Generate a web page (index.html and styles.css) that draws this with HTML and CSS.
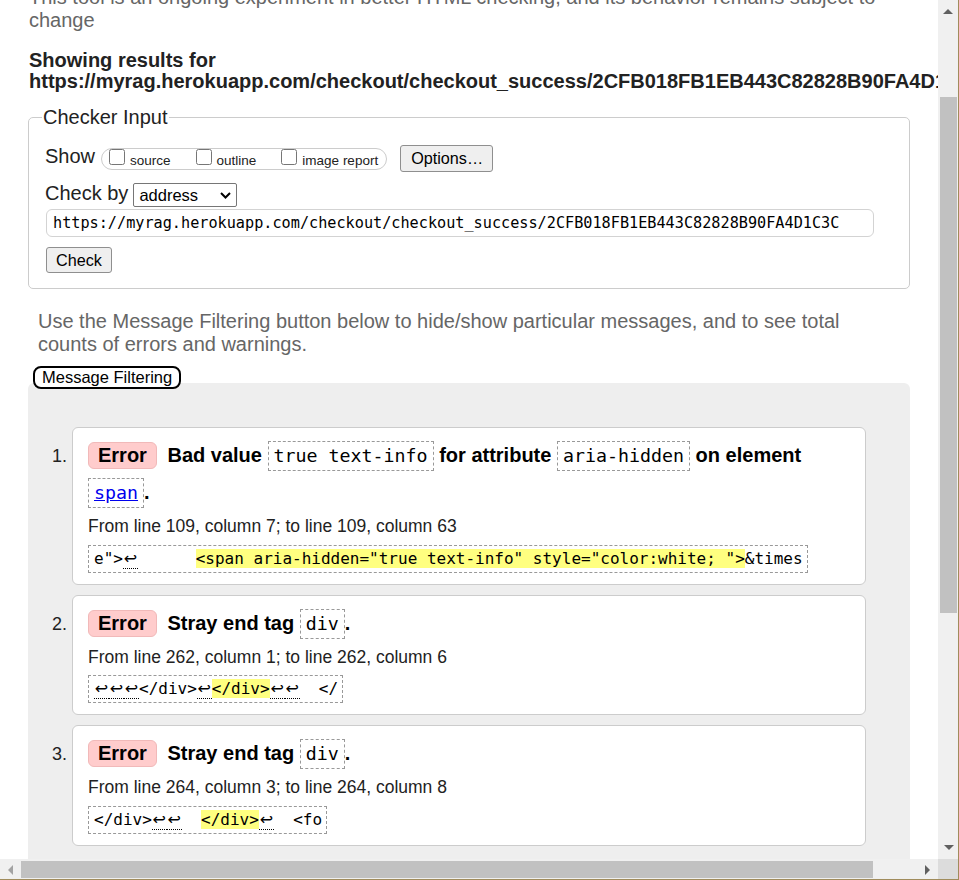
FILE: index.html
```html
<!DOCTYPE html>
<html lang="en">
<head>
<meta charset="utf-8">
<title>Nu Html Checker</title>
<link rel="stylesheet" href="styles.css">
</head>
<body>
<div class="page">
  <p class="intro">This tool is an ongoing experiment in better HTML checking, and its behavior remains subject to change</p>
  <h2 class="results-for">Showing results for <span class="results-url">https://myrag.herokuapp.com/checkout/checkout_success/2CFB018FB1EB443C82828B90FA4D1C3C</span></h2>

  <fieldset class="checker">
    <legend>Checker Input</legend>
    <div class="row show-row">
      <span class="row-label">Show</span>
      <span class="checkboxes">
        <label class="cb"><input type="checkbox"><span>source</span></label>
        <label class="cb"><input type="checkbox"><span>outline</span></label>
        <label class="cb"><input type="checkbox"><span>image report</span></label>
      </span>
      <button class="btn btn-options" type="button">Options…</button>
    </div>
    <div class="row checkby-row">
      <span class="row-label">Check by</span>
      <span class="select" role="combobox" aria-label="Check by">
        <span>address</span>
        <svg class="chev" width="11" height="7" viewBox="0 0 11 7"><path d="M1 1 L5.5 5.5 L10 1" fill="none" stroke="#000" stroke-width="2"/></svg>
      </span>
    </div>
    <input class="url-input" type="text" value="https://myrag.herokuapp.com/checkout/checkout_success/2CFB018FB1EB443C82828B90FA4D1C3C">
    <button class="btn btn-check" type="button">Check</button>
  </fieldset>

  <p class="filter-note">Use the Message Filtering button below to hide/show particular messages, and to see total counts of errors and warnings.</p>
  <button class="filter-btn" type="button">Message Filtering</button>

  <div class="results">
    <ol class="messages">
      <li class="message">
        <p class="msg"><span class="badge">Error</span> Bad value <code class="c">true text-info</code> for attribute <code class="c">aria-hidden</code> on element <code class="c"><a href="#">span</a></code>.</p>
        <p class="loc">From line 109, column 7; to line 109, column 63</p>
        <code class="extract">e"&gt;<span class="lf">↩</span>      <span class="hl">&lt;span aria-hidden="true text-info" style="color:white; "&gt;</span>&amp;times</code>
      </li>
      <li class="message">
        <p class="msg"><span class="badge">Error</span> Stray end tag <code class="c">div</code>.</p>
        <p class="loc">From line 262, column 1; to line 262, column 6</p>
        <code class="extract"><span class="lf">↩</span><span class="lf">↩</span><span class="lf">↩</span>&lt;/div&gt;<span class="lf">↩</span><span class="hl">&lt;/div&gt;</span><span class="lf">↩</span><span class="lf">↩</span>  &lt;/</code>
      </li>
      <li class="message">
        <p class="msg"><span class="badge">Error</span> Stray end tag <code class="c">div</code>.</p>
        <p class="loc">From line 264, column 3; to line 264, column 8</p>
        <code class="extract">&lt;/div&gt;<span class="lf">↩</span><span class="lf">↩</span>  <span class="hl">&lt;/div&gt;</span><span class="lf">↩</span>  &lt;fo</code>
      </li>
    </ol>
  </div>
</div>

<div class="vscroll">
  <svg class="arr arr-up" width="10" height="5" viewBox="0 0 10 5"><polygon points="0,5 5,0 10,5" fill="#606060"/></svg>
  <div class="vthumb"></div>
  <svg class="arr arr-down" width="10" height="5" viewBox="0 0 10 5"><polygon points="0,0 10,0 5,5" fill="#606060"/></svg>
</div>
<div class="hscroll">
  <svg class="arr arr-left" width="5" height="10" viewBox="0 0 5 10"><polygon points="5,0 5,10 0,5" fill="#a3a3a3"/></svg>
  <div class="hthumb"></div>
  <svg class="arr arr-right" width="5" height="10" viewBox="0 0 5 10"><polygon points="0,0 5,5 0,10" fill="#606060"/></svg>
</div>
<div class="corner"></div>
<div class="frame-r"></div>
<div class="frame-b"></div>
</body>
</html>
```
FILE: styles.css
```css
html, body {
  margin: 0;
  padding: 0;
  overflow: hidden;
  background: #fff;
}
body {
  font-family: "Liberation Sans", Arial, sans-serif;
  font-size: 20px;
  color: #222;
}
.page {
  width: 882px;
  margin: -14px 0 0 28px;
}
.intro {
  margin: 0;
  padding-left: 1px;
  color: #666;
  line-height: 23px;
}
.results-for {
  margin: 18px 0 0;
  padding-left: 1px;
  font-size: 20px;
  line-height: 20.5px;
  font-weight: bold;
  color: #222;
}
.results-url {
  white-space: nowrap;
}

/* Checker input */
.checker {
  margin: 15px 0 0;
  padding: 16px 15px 15px 16px;
  border: 1px solid #ccc;
  border-radius: 5px;
  min-width: 0;
}
.checker legend {
  padding: 0 1px;
  margin-left: -3px;
  font-size: 20px;
  line-height: 23px;
  color: #222;
}
.row {
  display: flex;
  align-items: center;
}
.show-row {
  height: 27px;
}
.row-label {
  line-height: 23px;
  margin-bottom: 4px;
}
.show-row .row-label {
  margin-right: 6px;
}
.checkby-row .row-label {
  margin-right: 5px;
}
.checkboxes {
  display: flex;
  align-items: flex-start;
  box-sizing: border-box;
  height: 22px;
  border: 1px solid #ccc;
  border-radius: 11px;
  padding: 0 8px 0 7px;
}
.cb {
  display: flex;
  align-items: baseline;
  gap: 5px;
  font-size: 13.5px;
  color: #222;
  margin-right: 25px;
}
.cb:last-child {
  margin-right: 0;
}
.cb input {
  width: 16px;
  height: 16px;
  margin: 0;
}
.btn {
  font-family: "Liberation Sans", Arial, sans-serif;
  font-size: 16.2px;
  color: #000;
  background: #efefef;
  border: 1px solid #8f8f8f;
  border-radius: 3px;
  box-sizing: border-box;
}
.btn-options {
  margin-left: 13px;
  height: 27px;
  padding: 0 9px 0 10px;
}
.checkby-row {
  margin-top: 11px;
  height: 24px;
}
.select {
  display: flex;
  align-items: center;
  justify-content: space-between;
  box-sizing: border-box;
  width: 104px;
  height: 24px;
  border: 1px solid #767676;
  border-radius: 2px;
  padding: 0 5px 0 5px;
  font-size: 16.5px;
  color: #000;
  background: #fff;
}
.url-input {
  display: block;
  box-sizing: border-box;
  width: 828px;
  height: 28px;
  margin: 2px 0 0 1px;
  padding: 0 6px;
  border: 1px solid #d3d3d3;
  border-radius: 6px;
  font-family: "DejaVu Sans Mono", monospace;
  font-size: 15.2px;
  color: #000;
  background: #fff;
  outline: none;
}
.btn-check {
  display: block;
  margin: 10px 0 0 1px;
  height: 26px;
  padding: 0 9px;
}

/* Filtering */
.filter-note {
  margin: 21px 10px 0;
  color: #666;
  line-height: 23px;
}
.filter-btn {
  display: block;
  position: relative;
  z-index: 1;
  box-sizing: border-box;
  height: 23px;
  margin: 10px 0 -6px 5px;
  padding: 0 7px;
  border: 2px solid #000;
  border-radius: 8px;
  background: #fff;
  font-family: "Liberation Sans", Arial, sans-serif;
  font-size: 16.5px;
  line-height: 19px;
  color: #000;
}
.results {
  background: #eee;
  border-radius: 6px 6px 0 0;
  padding: 44px 44px 200px;
}
.messages {
  margin: 0;
  padding: 0;
  list-style: decimal outside;
}
.message {
  background: #fff;
  border: 1px solid #ccc;
  border-radius: 6px;
  padding: 9px 15px 11px;
  margin-bottom: 10px;
  font-size: 17.5px;
  color: #222;
}
.message::marker {
  font-size: 18px;
}
.msg {
  margin: 0;
  font-size: 20px;
  font-weight: bold;
  line-height: 37px;
  color: #000;
}
.badge {
  display: inline-block;
  line-height: 23px;
  padding: 1px 9px;
  border: 1px solid #f1b9b9;
  border-radius: 6px;
  background: #fcc;
  margin-right: 5px;
}
.c {
  display: inline-block;
  font-family: "DejaVu Sans Mono", monospace;
  font-size: 18.3px;
  font-weight: normal;
  line-height: 22px;
  padding: 3px 5px;
  border: 1px dashed #999;
  color: #000;
}
.c a {
  color: #00e;
  text-decoration: underline;
}
.loc {
  margin: 5px 0 0;
}
.extract {
  display: block;
  width: max-content;
  margin-top: 7.5px;
  font-family: "DejaVu Sans Mono", monospace;
  font-size: 16px;
  line-height: 20px;
  padding: 3px 4px 3px 5px;
  border: 1px dashed #999;
  white-space: pre;
  color: #000;
}
.hl {
  background: #ffff80;
}
.lf {
  display: inline-block;
  width: 15px;
  text-align: center;
  font-family: "DejaVu Sans", sans-serif;
  line-height: 18px;
  border-bottom: 1px dotted #000;
}

/* Window chrome overlays */
.vscroll {
  position: fixed;
  left: 938px;
  top: 0;
  width: 20px;
  height: 859px;
  background: #f0f0f0;
}
.vthumb {
  position: absolute;
  left: 2px;
  top: 97px;
  width: 17px;
  height: 516px;
  background: #c1c1c1;
}
.hscroll {
  position: fixed;
  left: 0;
  top: 859px;
  width: 938px;
  height: 20px;
  background: #f0f0f0;
}
.hthumb {
  position: absolute;
  left: 21px;
  top: 2px;
  width: 852px;
  height: 17px;
  background: #c1c1c1;
}
.arr {
  position: absolute;
  display: block;
}
.arr-up { left: 5px; top: 9px; }
.arr-down { left: 6px; top: 845px; }
.arr-left { left: 8px; top: 6px; }
.arr-right { left: 925px; top: 6px; }
.corner {
  position: fixed;
  left: 938px;
  top: 859px;
  width: 20px;
  height: 20px;
  background: #dcdcdc;
}
.frame-r {
  position: fixed;
  left: 958px;
  top: 0;
  width: 1px;
  height: 880px;
  background: #a08c5c;
}
.frame-b {
  position: fixed;
  left: 0;
  top: 879px;
  width: 959px;
  height: 1px;
  background: #a08c5c;
}
```
